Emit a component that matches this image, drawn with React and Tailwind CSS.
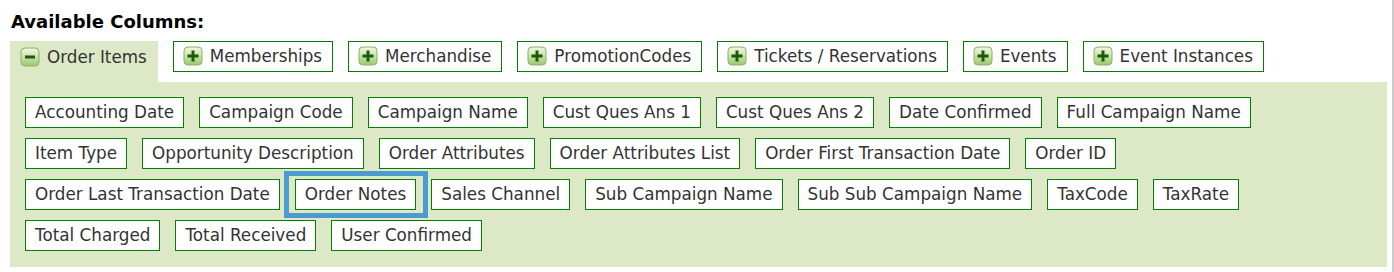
import React from "react";

const tabs = [
  "Memberships",
  "Merchandise",
  "PromotionCodes",
  "Tickets / Reservations",
  "Events",
  "Event Instances",
];

const rows = [
  [
    "Accounting Date",
    "Campaign Code",
    "Campaign Name",
    "Cust Ques Ans 1",
    "Cust Ques Ans 2",
    "Date Confirmed",
    "Full Campaign Name",
  ],
  [
    "Item Type",
    "Opportunity Description",
    "Order Attributes",
    "Order Attributes List",
    "Order First Transaction Date",
    "Order ID",
  ],
  [
    "Order Last Transaction Date",
    "Order Notes",
    "Sales Channel",
    "Sub Campaign Name",
    "Sub Sub Campaign Name",
    "TaxCode",
    "TaxRate",
  ],
  ["Total Charged", "Total Received", "User Confirmed"],
];

const ToggleIcon = ({ open }) => (
  <svg width="20" height="20" viewBox="0 0 20 20" className="shrink-0">
    <defs>
      <linearGradient id={open ? "gMinus" : "gPlus"} x1="0" y1="0" x2="0" y2="1">
        <stop offset="0" stopColor="#f1f8e6" />
        <stop offset="0.5" stopColor="#c8e2a8" />
        <stop offset="1" stopColor="#9cc872" />
      </linearGradient>
    </defs>
    <rect
      x="1"
      y="1"
      width="18"
      height="18"
      rx="4"
      fill={`url(#${open ? "gMinus" : "gPlus"})`}
      stroke="#88b465"
    />
    {open ? (
      <path d="M5 10h10" stroke="#1d5a0c" strokeWidth="3" />
    ) : (
      <path d="M4.5 10h11M10 4.5v11" stroke="#1d5a0c" strokeWidth="3" />
    )}
  </svg>
);

const App = () => {
  return (
    <div
      className="w-[1394px] h-[272px] bg-white pl-[10px] pr-[5px] border-r-2 border-[#cccccc] text-[#333333]"
      style={{ fontFamily: '"DejaVu Sans", Verdana, sans-serif' }}
    >
      <h2 className="pt-[12px] pl-[1px] text-[18px] leading-[20px] font-bold text-black mb-[9px]">
        Available Columns:
      </h2>

      {/* Tabs */}
      <div className="flex items-start gap-[15px] h-[41px]">
        <div className="h-[41px] bg-[#dde9c6] pl-[10px] pr-[11px] pt-[6px] flex items-start gap-[7px] text-[16.75px] leading-[19px]">
          <ToggleIcon open />
          <span className="pt-[1px]">Order Items</span>
        </div>
        {tabs.map((t, i) => (
          <div
            key={i}
            className="h-[31px] border border-[#008000] bg-white pl-[9px] pr-[10px] pt-[4px] flex items-start gap-[7px] text-[16.75px] leading-[19px]"
          >
            <ToggleIcon />
            <span className="pt-[1px]">{t}</span>
          </div>
        ))}
      </div>

      {/* Panel */}
      <div className="bg-[#dde9c6] pt-[15px] pb-[16px] px-[15px] flex flex-col gap-[10px]">
        {rows.map((row, r) => (
          <div key={r} className="flex gap-[15px]">
            {row.map((name, i) => (
              <div key={i} className="relative">
                <div className="h-[31px] border border-[#008000] bg-white px-[9px] pt-[5px] text-[16.8px] leading-[19px] whitespace-nowrap">
                  {name}
                </div>
                {name === "Order Notes" && (
                  <span className="absolute -left-[11px] -right-[12px] -top-[8px] -bottom-[8px] border-[5px] border-[#4b9ad0] pointer-events-none" />
                )}
              </div>
            ))}
          </div>
        ))}
      </div>
    </div>
  );
};

export default App;
